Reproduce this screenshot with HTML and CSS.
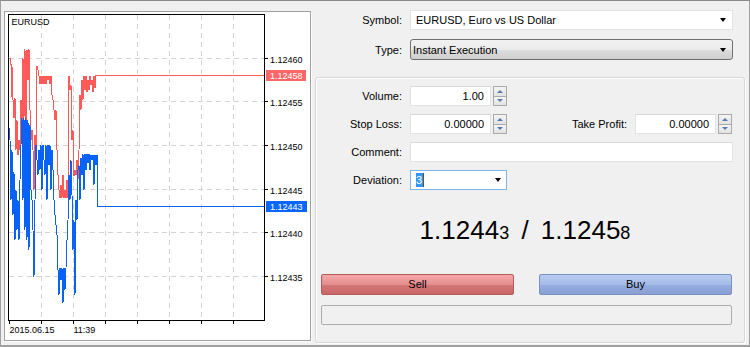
FILE: index.html
```html
<!DOCTYPE html>
<html>
<head>
<meta charset="utf-8">
<link rel="stylesheet" href="styles.css">
</head>
<body>
<div class="window">
  <div class="chart-panel">
    <svg class="chart" width="305" height="328" viewBox="5 12 305 328">
      <g class="grid">
        <line x1="9" y1="58.5" x2="264" y2="58.5"/>
        <line x1="9" y1="101.5" x2="264" y2="101.5"/>
        <line x1="9" y1="145.5" x2="264" y2="145.5"/>
        <line x1="9" y1="189.5" x2="264" y2="189.5"/>
        <line x1="9" y1="232.5" x2="264" y2="232.5"/>
        <line x1="9" y1="276.5" x2="264" y2="276.5"/>
        <line x1="41.5" y1="15" x2="41.5" y2="320"/>
        <line x1="73.5" y1="15" x2="73.5" y2="320"/>
        <line x1="105.5" y1="15" x2="105.5" y2="320"/>
        <line x1="137.5" y1="15" x2="137.5" y2="320"/>
        <line x1="169.5" y1="15" x2="169.5" y2="320"/>
        <line x1="201.5" y1="15" x2="201.5" y2="320"/>
        <line x1="233.5" y1="15" x2="233.5" y2="320"/>
      </g>
      <g class="ticks">
        <line x1="264" y1="58.5" x2="268" y2="58.5"/>
        <line x1="264" y1="101.5" x2="268" y2="101.5"/>
        <line x1="264" y1="145.5" x2="268" y2="145.5"/>
        <line x1="264" y1="189.5" x2="268" y2="189.5"/>
        <line x1="264" y1="232.5" x2="268" y2="232.5"/>
        <line x1="264" y1="276.5" x2="268" y2="276.5"/>
        <line x1="9.5" y1="320" x2="9.5" y2="324"/>
        <line x1="41.5" y1="320" x2="41.5" y2="324"/>
        <line x1="73.5" y1="320" x2="73.5" y2="324"/>
        <line x1="105.5" y1="320" x2="105.5" y2="324"/>
        <line x1="137.5" y1="320" x2="137.5" y2="324"/>
        <line x1="169.5" y1="320" x2="169.5" y2="324"/>
        <line x1="201.5" y1="320" x2="201.5" y2="324"/>
        <line x1="233.5" y1="320" x2="233.5" y2="324"/>
      </g>
      <polyline class="ask" points="9,58 10,58 10,64 11,64 11,97 12,66 13,100 14,118 15,98 16,150 17,120 18,155 19,140 20,150 21,100 22,130 23,58 24,118 25,49 26,145 27,50 28,80 29,49 30,110 31,140 32,130 33,150 34,190 35,135 36,160 37,66 38,70 39,76 40,84 41,76 42,84 43,76 44,84 45,76 46,84 47,76 48,80 49,76 50,84 51,76 52,95 53,100 54,110 55,120 56,110 57,150 58,175 59,190 60,198 61,185 62,198 63,175 64,198 65,190 66,198 67,180 68,198 69,76 70,90 71,85 72,140 73,130 74,176 75,170 76,175 77,160 78,180 79,150 80,95 81,110 82,80 83,100 84,76 85,90 86,76 87,92 88,80 89,90 90,76 91,85 92,80 93,92 94,76 95,88 96,75 97,75 264,75"/>
      <polyline class="bid" points="9,128 10,140 11,200 12,150 13,215 14,172 15,240 16,190 17,230 18,200 19,240 20,180 21,145 22,118 23,200 24,118 25,230 26,118 27,240 28,120 29,250 30,125 31,190 32,200 33,230 34,277 35,200 36,145 37,160 38,175 39,150 40,170 41,145 42,190 43,145 44,160 45,175 46,145 47,200 48,145 49,165 50,145 51,190 52,150 53,170 54,200 55,215 56,225 57,235 58,270 59,295 60,268 61,280 62,268 63,303 64,268 65,290 66,268 67,240 68,220 69,175 70,200 71,160 72,195 73,250 74,220 75,295 76,200 77,220 78,170 79,165 80,200 81,158 82,175 83,154 84,190 85,154 86,170 87,154 88,163 89,154 90,170 91,155 92,160 93,155 94,185 95,155 96,165 97,155 97,206 264,206"/>
      <rect class="frame" x="8.5" y="14.5" width="256" height="306"/>
      <text class="lbl" x="11.5" y="25">EURUSD</text>
      <text class="lbl" x="270" y="62.5">1.12460</text>
      <rect class="ask-box" x="266" y="70" width="40" height="11"/>
      <text class="lbl white" x="270" y="79">1.12458</text>
      <text class="lbl" x="270" y="105.5">1.12455</text>
      <text class="lbl" x="270" y="149.5">1.12450</text>
      <text class="lbl" x="270" y="193.5">1.12445</text>
      <rect class="bid-box" x="266" y="201" width="41" height="11"/>
      <text class="lbl white" x="270" y="210">1.12443</text>
      <text class="lbl" x="270" y="236.5">1.12440</text>
      <text class="lbl" x="270" y="280.5">1.12435</text>
      <text class="lbl" x="9.5" y="333">2015.06.15</text>
      <text class="lbl" x="73.5" y="333">11:39</text>
    </svg>
  </div>

  <div class="order">
    <div class="top-row">
      <span class="label">Symbol:</span>
      <div class="select plain"><span>EURUSD, Euro vs US Dollar</span><i class="arrow"></i></div>
    </div>
    <div class="top-row second">
      <span class="label">Type:</span>
      <div class="select combo"><span>Instant Execution</span><i class="arrow"></i></div>
    </div>

    <div class="group">
      <div class="row">
        <span class="label">Volume:</span>
        <div class="field num">1.00</div>
        <div class="spin"><b class="up"><i></i></b><b class="down"><i></i></b></div>
      </div>
      <div class="row">
        <span class="label">Stop Loss:</span>
        <div class="field num">0.00000</div>
        <div class="spin"><b class="up"><i></i></b><b class="down"><i></i></b></div>
        <span class="label wide">Take Profit:</span>
        <div class="field num">0.00000</div>
        <div class="spin"><b class="up"><i></i></b><b class="down"><i></i></b></div>
      </div>
      <div class="row">
        <span class="label">Comment:</span>
        <div class="field full"></div>
      </div>
      <div class="row">
        <span class="label">Deviation:</span>
        <div class="field dev"><span class="sel">3</span><span class="caret"></span><i class="arrow"></i></div>
      </div>

      <div class="quote">1.1244<small>3</small> / 1.1245<small>8</small></div>

      <div class="buttons">
        <div class="btn sell">Sell</div>
        <div class="btn buy">Buy</div>
      </div>
      <div class="progress"></div>
    </div>
  </div>
</div>
</body>
</html>
```

FILE: styles.css
```css
html, body {
  margin: 0;
  padding: 0;
}
body {
  width: 750px;
  height: 347px;
  overflow: hidden;
  font-family: "Liberation Sans", Arial, sans-serif;
  font-size: 11px;
  color: #000;
}
.window {
  width: 750px;
  height: 347px;
  box-sizing: border-box;
  border: 1px solid #a0a0a0;
  border-top-color: #8a8a8a;
  border-bottom-width: 2px;
  background: #f0f0f0;
  display: flex;
  align-items: flex-start;
}

/* chart */
.chart-panel {
  margin: 10px 0 0 3px;
  width: 305px;
  height: 328px;
  border: 1px solid #a0a0a0;
  box-shadow: 1px 1px 0 #fdfdfd;
  background: #fff;
  flex: none;
}
.chart {
  display: block;
}
.grid line {
  stroke: #d4d4d4;
  stroke-width: 1;
  stroke-dasharray: 5 4;
}
.ticks line {
  stroke: #000;
  stroke-width: 1;
}
.frame {
  fill: none;
  stroke: #000;
  stroke-width: 1;
}
.ask, .bid {
  fill: none;
  stroke-width: 1;
  shape-rendering: crispEdges;
}
.ask { stroke: #ff5a5a; }
.bid { stroke: #0862f5; }
.ask-box { fill: #ff6767; }
.bid-box { fill: #0a66ff; }
.lbl {
  font-family: "Liberation Sans", Arial, sans-serif;
  font-size: 9px;
  fill: #000;
}
.lbl.white { fill: #fff; }

/* order form */
.order {
  flex: 1;
  padding-top: 9px;
  margin-left: 1px;
}
.top-row {
  display: flex;
  align-items: center;
  height: 20px;
}
.top-row.second {
  margin-top: 9px;
  height: 21px;
}
.top-row .label {
  width: 90px;
}
.label {
  text-align: right;
  margin-right: 8px;
  flex: none;
  white-space: nowrap;
}
.select {
  width: 323px;
  height: 100%;
  box-sizing: border-box;
  display: flex;
  align-items: center;
  justify-content: space-between;
  flex: none;
}
.select.plain {
  background: #fff;
  border: 1px solid #e3e3e3;
  padding: 0 5px 0 5px;
}
.select.combo {
  border: 1px solid #707070;
  border-radius: 3px;
  background: linear-gradient(#f2f2f2, #ebebeb 50%, #dddddd 51%, #cfcfcf);
  padding: 0 5px 0 2px;
}
.arrow {
  width: 0;
  height: 0;
  border-left: 3.5px solid transparent;
  border-right: 3.5px solid transparent;
  border-top: 4px solid #000;
  margin-right: 1px;
}

.group {
  margin: 17px 0 0 3px;
  border: 1px solid #d6d6d6;
  border-radius: 3px;
  box-shadow: inset 1px 1px 0 #fff, 1px 1px 0 #fff;
  padding: 8px 11px 0 5px;
  box-sizing: content-box;
  width: 412px;
  height: 256px;
}
.row {
  display: flex;
  align-items: center;
  height: 20px;
  margin-bottom: 8px;
}
.row .label { width: 81px; }
.row .label.wide { width: 120px; }
.field {
  height: 20px;
  box-sizing: border-box;
  background: #fff;
  border: 1px solid #e3e3e3;
  border-top-color: #d9d9d9;
  flex: none;
}
.field.num {
  width: 81px;
  text-align: right;
  padding-right: 6px;
  line-height: 18px;
}
.field.full { width: 323px; }
.field.dev {
  width: 97px;
  border-color: #7eb4ea;
  display: flex;
  align-items: center;
  padding-left: 5px;
  padding-right: 4px;
}
.sel {
  background: #3399ff;
  color: #fff;
  line-height: 14px;
  padding: 0 1px 0 0;
}
.caret {
  width: 1px;
  height: 14px;
  background: #7a4a1a;
  margin-right: auto;
}
.spin {
  width: 14px;
  height: 20px;
  margin-left: 2px;
  display: flex;
  flex-direction: column;
  flex: none;
}
.spin b {
  flex: 1;
  box-sizing: border-box;
  border: 1px solid #a9a9a9;
  background: linear-gradient(#f5f5f5, #e2e2e2);
  display: flex;
  align-items: center;
  justify-content: center;
}
.spin b.down { border-top: none; }
.spin .up i {
  border-left: 3px solid transparent;
  border-right: 3px solid transparent;
  border-bottom: 3px solid #5b78ad;
}
.spin .down i {
  border-left: 3px solid transparent;
  border-right: 3px solid transparent;
  border-top: 3px solid #5b78ad;
}

.quote {
  margin-top: 25px;
  height: 30px;
  line-height: 30px;
  font-size: 26px;
  text-align: center;
  padding-right: 4px;
  word-spacing: 5px;
  color: #000;
}
.quote small {
  font-size: 18px;
}
.buttons {
  margin-top: 29px;
  display: flex;
  gap: 25px;
}
.btn {
  width: 193px;
  height: 21px;
  box-sizing: border-box;
  border-radius: 2px;
  text-align: center;
  line-height: 19px;
}
.sell {
  background: linear-gradient(#f6a8a8, #e38d8d 50%, #d57777 51%, #c86666);
  border: 1px solid #b55a5a;
}
.buy {
  background: linear-gradient(#b8cbf1, #a5bbe8 50%, #96ade0 51%, #889fd4);
  border: 1px solid #7c8fbf;
}
.progress {
  margin-top: 10px;
  width: 411px;
  height: 20px;
  box-sizing: border-box;
  border: 1px solid #adadad;
  border-radius: 2px;
  background: #f0f0f0;
}
```
